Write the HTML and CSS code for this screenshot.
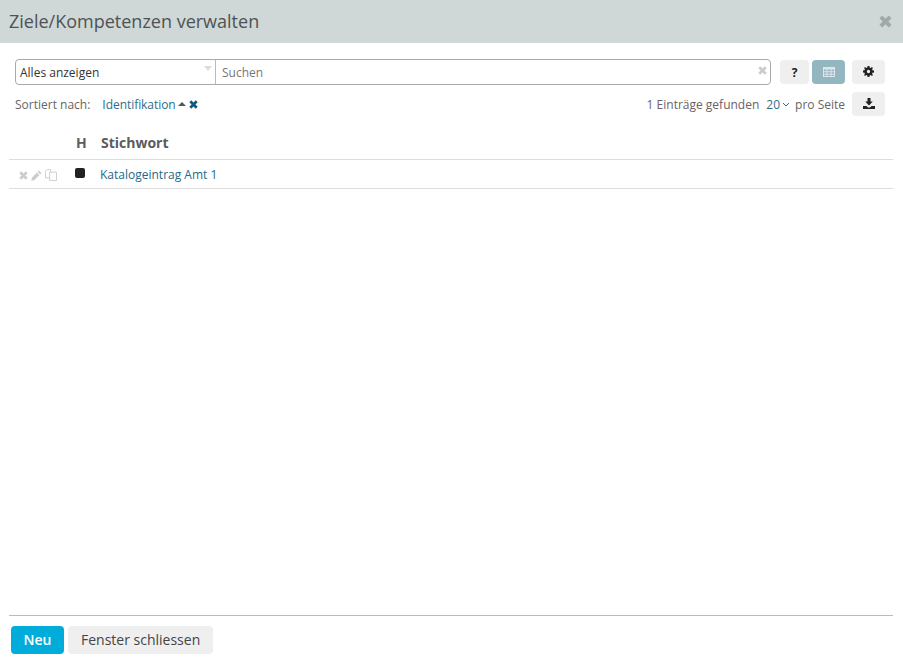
FILE: index.html
```html
<!DOCTYPE html>
<html lang="de">
<head>
<meta charset="utf-8">
<title>Ziele/Kompetenzen verwalten</title>
<link rel="stylesheet" href="styles.css">
</head>
<body>
<div class="dialog">
  <header class="titlebar">
    <h1 class="title">Ziele/Kompetenzen verwalten</h1>
    <svg class="close" viewBox="0 0 12 12"><path d="M3 0.4 6 3.4 9 0.4 11.6 3 8.6 6 11.6 9 9 11.6 6 8.6 3 11.6 0.4 9 3.4 6 0.4 3Z"/></svg>
  </header>
  <main class="content">
    <div class="toolbar">
      <div class="search">
        <div class="filter"><span>Alles anzeigen</span><i class="caret"></i></div>
        <div class="query"><span>Suchen</span>
          <svg class="clear" viewBox="0 0 12 12"><path d="M3 0.4 6 3.4 9 0.4 11.6 3 8.6 6 11.6 9 9 11.6 6 8.6 3 11.6 0.4 9 3.4 6 0.4 3Z"/></svg>
        </div>
      </div>
      <button class="tool help">?</button>
      <button class="tool active">
        <svg class="ico-grid" viewBox="0 0 12 10"><path d="M0 0H12V10H0ZM1 2.5V4.2H3.4V2.5ZM4.4 2.5V4.2H7.6V2.5ZM8.6 2.5V4.2H11V2.5ZM1 5.2V6.8H3.4V5.2ZM4.4 5.2V6.8H7.6V5.2ZM8.6 5.2V6.8H11V5.2ZM1 7.8V9H3.4V7.8ZM4.4 7.8V9H7.6V7.8ZM8.6 7.8V9H11V7.8Z" fill-rule="evenodd"/></svg>
      </button>
      <button class="tool wide">
        <svg class="ico gear" viewBox="0 0 12 12"><path fill-rule="evenodd" d="M5 0H7L7.3 1.6 8.4 2.1 9.8 1.2 10.8 2.2 9.9 3.6 10.4 4.7 12 5V7L10.4 7.3 9.9 8.4 10.8 9.8 9.8 10.8 8.4 9.9 7.3 10.4 7 12H5L4.7 10.4 3.6 9.9 2.2 10.8 1.2 9.8 2.1 8.4 1.6 7.3 0 7V5L1.6 4.7 2.1 3.6 1.2 2.2 2.2 1.2 3.6 2.1 4.7 1.6ZM6 4.2A1.8 1.8 0 1 0 6 7.8 1.8 1.8 0 1 0 6 4.2Z"/></svg>
      </button>
    </div>
    <div class="sortbar">
      <span class="label">Sortiert nach:</span>
      <span class="sort-key">Identifikation</span>
      <i class="sort-up"></i>
      <svg class="sort-x" viewBox="0 0 12 12"><path d="M3 0.4 6 3.4 9 0.4 11.6 3 8.6 6 11.6 9 9 11.6 6 8.6 3 11.6 0.4 9 3.4 6 0.4 3Z"/></svg>
      <span class="found">1 Einträge gefunden</span>
      <span class="per">20<svg class="chev" viewBox="0 0 8 5"><path d="M1 1 4 4 7 1" fill="none" stroke="currentColor"/></svg></span>
      <span class="label">pro Seite</span>
      <button class="tool wide">
        <svg class="ico export" viewBox="0 0 12 12"><path d="M4.5 0H7.5V3.5H9.8L6 7.4 2.2 3.5H4.5ZM0 8H3.5L5 9.5H7L8.5 8H12V11H0Z"/></svg>
      </button>
    </div>
    <div class="table">
      <div class="thead"><span class="col-h">H</span><span class="col-k">Stichwort</span></div>
      <div class="row">
        <span class="actions">
          <svg class="act-x" viewBox="0 0 12 12"><path d="M3 0.4 6 3.4 9 0.4 11.6 3 8.6 6 11.6 9 9 11.6 6 8.6 3 11.6 0.4 9 3.4 6 0.4 3Z"/></svg>
          <svg class="act-pen" viewBox="0 0 12 12"><path d="M8.6 0.6 11.4 3.4 10 4.8 7.2 2ZM6.4 2.8 9.2 5.6 3.4 11.2 0.4 11.6 0.8 8.6Z"/></svg>
          <svg class="act-copy" viewBox="0 0 13 13"><path fill="none" stroke="currentColor" d="M0.5 2.5V9.5H5M0.5 2.5 3 0.5H6V3.5M5 3.5H12.5V12.5H5Z"/></svg>
        </span>
        <i class="swatch"></i>
        <span class="entry">Katalogeintrag Amt 1</span>
      </div>
    </div>
  </main>
  <footer class="footer">
    <button class="btn primary">Neu</button>
    <button class="btn">Fenster schliessen</button>
  </footer>
</div>
</body>
</html>
```
FILE: styles.css
```css
* { box-sizing: border-box; }
html, body { margin: 0; height: 100%; }
body { background: #fff; font-family: "Open Sans", sans-serif; font-size: 12px; color: #555; }
button { font-family: inherit; border: 0; cursor: pointer; padding: 0; }
.dialog { height: 670px; display: flex; flex-direction: column; overflow: hidden; }
.titlebar { height: 43px; flex: none; background: #cfd8d7; display: flex; align-items: center; justify-content: space-between; padding: 0 11px 2px 9px; }
.title { margin: 0; font-size: 18px; font-weight: 400; color: #4d5354; }
.close { width: 13px; height: 13px; fill: #a0a8a8; margin-top: 1px; }
.content { flex: 1; padding: 16px 9px 0; display: flex; flex-direction: column; }
.toolbar { display: flex; align-items: center; padding: 0 8px 0 6px; height: 26px; }
.search { width: 756px; height: 26px; border: 1px solid #aaa; border-radius: 4px; display: flex; margin-right: 9px; }
.filter { width: 200px; border-right: 1px solid #bbb; padding: 0 4px; display: flex; justify-content: space-between; line-height: 25px; color: #333; position: relative; }
.caret { position: absolute; right: 3px; top: 6px; border: 4.5px solid transparent; border-top: 5px solid #ddd; border-bottom: 0; }
.query { flex: 1; padding: 0 6px; line-height: 25px; color: #777; display: flex; justify-content: space-between; align-items: center; }
.clear { width: 9px; height: 9px; fill: #ccc; margin: -4px -3px 0 0; }
.tool { height: 24px; background: #efefef; border-radius: 4px; display: flex; align-items: center; justify-content: center; color: #222; }
.help { width: 29px; font-weight: 700; font-size: 12px; margin-right: 3px; }
.active { width: 33px; background: #93b6c0; margin-right: 7px; }
.wide { width: 33px; }
.ico { width: 12px; height: 12px; fill: #222; }
.gear { width: 11px; height: 11px; margin-top: -1px; }
.export { margin-top: -1px; }
.ico-grid { width: 12px; height: 10px; fill: #dbe7ea; margin-top: -1px; }
.sortbar { display: flex; align-items: center; height: 24px; margin-top: 7px; padding: 0 9px 0 6px; }
.label { color: #666; }
.sort-key { color: #2d6f8a; margin-left: 12px; letter-spacing: -0.05px; }
.sort-up { border: 4px solid transparent; border-bottom: 4px solid #555; border-top: 0; margin: 0 3px 0 2px; }
.sort-x { width: 9px; height: 9px; fill: #0c5a80; }
.found { margin-left: auto; color: #6b6166; }
.per { color: #2d6f8a; margin: 0 5px 0 7px; display: flex; align-items: center; }
.chev { width: 8px; height: 5px; margin-left: 2px; color: #2d6f8a; }
.sortbar .tool { margin-left: 7px; }
.table { margin-top: 11px; margin-right: 1px; }
.thead { display: flex; align-items: center; height: 33px; padding-bottom: 2px; border-bottom: 1px solid #ddd; font-weight: 700; font-size: 14px; color: #5c5c5c; }
.col-h { margin-left: 67px; width: 25px; }
.row { display: flex; align-items: center; height: 29px; border-bottom: 1px solid #ddd; }
.actions { width: 66px; padding-left: 10px; display: flex; align-items: center; gap: 3px; color: #ccc; margin-top: 2px; }
.act-x { width: 9px; height: 9px; fill: #ccc; }
.act-pen { width: 11px; height: 11px; fill: #ccc; }
.act-copy { width: 12px; height: 12px; color: #ccc; }
.swatch { width: 10px; height: 10px; background: #222; border-radius: 2px; margin-right: 15px; margin-top: -2px; }
.entry { color: #1f6a86; }
.footer { flex: none; margin: 0 10px 0 9px; border-top: 1px solid #bbb; padding: 10px 2px 16px; display: flex; gap: 4px; height: 55px; }
.btn { height: 28px; border-radius: 4px; background: #efefef; color: #444; font-size: 14px; padding: 0 13px 2px; }
.primary { background: #00acd9; color: #fff; font-weight: 600; width: 53px; padding: 0 0 2px; }
```
